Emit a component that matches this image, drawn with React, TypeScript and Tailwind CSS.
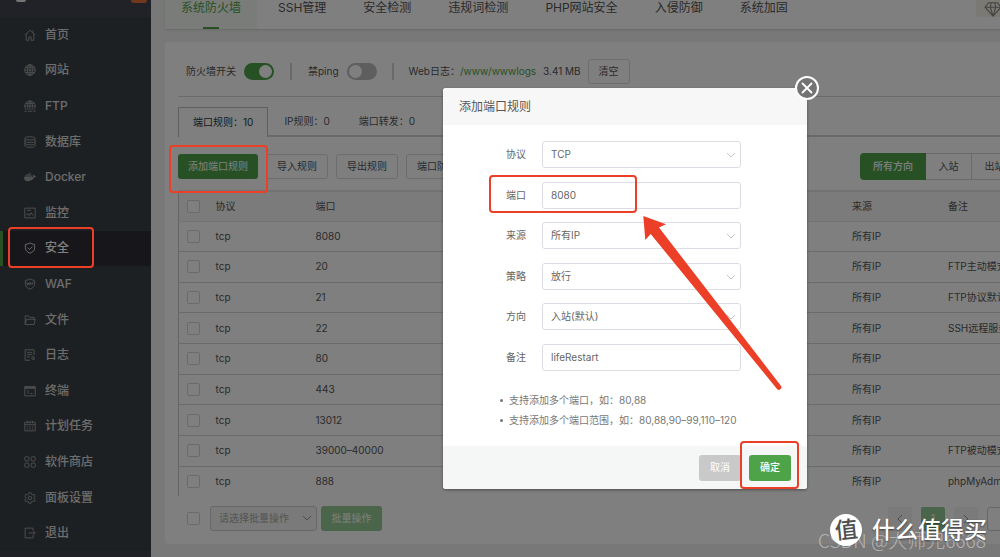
import type { ReactNode } from "react";
import { FaDocker } from "react-icons/fa";

const stroke = { fill: "none", stroke: "currentColor", strokeWidth: 1.2 };

function Icon({ children }: { children: ReactNode }) {
  return (
    <svg viewBox="0 0 16 16" className="size-3 shrink-0" aria-hidden="true" {...stroke}>
      {children}
    </svg>
  );
}

type NavItem = { label: string; icon: ReactNode; active?: boolean };

const shield = "M8 1.2c2 1.3 4 1.9 6.2 2v4.6c0 3.300-2.300 5.600-6.200 7.200-3.900-1.600-6.200-3.900-6.200-7.200V3.200C4 3.100 6 2.500 8 1.200z";

const nav: NavItem[] = [
  { label: "首页", icon: <Icon><path d="M1 8.200 8 1.600l7 6.600M3 7v8h3.500v-4.500h3V15H13V7M12 2v3" /></Icon> },
  { label: "网站", icon: <Icon><circle cx="8" cy="8" r="7" /><ellipse cx="8" cy="8" rx="3.200" ry="7" /><path d="M8 1v14M1 8h14M2 4.500h12M2 11.500h12" /></Icon> },
  { label: "FTP", icon: <Icon><path d="M3 13.200A7 7 0 1 1 13 13.200M1 8h14M8 1v12M2.500 4.500h11M0.500 15h3M5 15h6M12.500 15h3" /><path d="M5.500 13C4 9 4.500 4 8 1c3.500 3 4 8 2.500 12" /></Icon> },
  { label: "数据库", icon: <Icon><ellipse cx="8" cy="3.200" rx="6.800" ry="2.200" /><path d="M1.200 3.200v9.600c0 3 13.600 3 13.600 0V3.200M1.200 6.400c0 3 13.600 3 13.600 0M1.200 9.600c0 3 13.600 3 13.600 0" /></Icon> },
  { label: "Docker", icon: <FaDocker className="size-3 shrink-0" aria-hidden="true" /> },
  { label: "监控", icon: <Icon><path d="M1 1.500h14v13H1zM4 4.500h5M3 11l2.200-2.500 1.800 3 2.500-4 1.500 3h2" /></Icon> },
  { label: "安全", active: true, icon: <Icon><path d={shield} /><path d="m4.800 7.500 2.500 2.600 4-4" /></Icon> },
  { label: "WAF", icon: <Icon><path d={shield} /><path d="m3.500 6 1 3 1-2.500 1 2.500 1-3M7.500 9l1-3 1 3M11 9V6h2" /></Icon> },
  { label: "文件", icon: <Icon><path d="M1.500 14V2.500h4.500l1.500 2h6v2.500M1.500 14l2-7h11.500l-1.500 7z" /></Icon> },
  { label: "日志", icon: <Icon><path d="M13.500 8V1H1.500v14H8M4 4.500h7M4 7.500h7M4 10.500h4" /><circle cx="12" cy="12" r="1.800" /><path d="m13 13.500 1.500 1.500" /></Icon> },
  { label: "终端", icon: <Icon><path d="M1 2h14v12.500H1zM1 4.500h14M1 3.300h14M4 7l2.500 2.200L4 11.500M8 11.500h3.500" /></Icon> },
  { label: "计划任务", icon: <Icon><path d="M1 3h14v11.500H1zM1 6.200h14M4.500 1v3.500M8 1v3.500M11.500 1v3.500M3.500 9h2M7 9h2M10.500 9h2M3.500 12h2M7 12h2M10.500 12h2" /></Icon> },
  { label: "软件商店", icon: <Icon><rect x="1" y="1" width="5.500" height="5.500" rx="1.300" /><rect x="9.500" y="1" width="5.500" height="5.500" rx="1.300" /><rect x="1" y="9.500" width="5.500" height="5.500" rx="1.300" /><rect x="9.500" y="9.500" width="5.500" height="5.500" rx="1.300" /></Icon> },
  { label: "面板设置", icon: <Icon><path d="M6.500 1h3l.5 2 1.500.8 2-.7 1.500 2.400L13.500 7v2l1.500 1.500-1.500 2.400-2-.7-1.500.8-.5 2h-3L6 13l-1.500-.8-2 .7L1 10.500 2.500 9V7L1 5.500l1.500-2.400 2 .7L6 3z" /><circle cx="8" cy="8" r="2.300" /></Icon> },
  { label: "退出", icon: <Icon><path d="M12 5V1.500H1.500v13H12V11M6 8h9M12.300 5.300 15 8l-2.700 2.700" /></Icon> },
];

const tabs = ["系统防火墙", "SSH管理", "安全检测", "违规词检测", "PHP网站安全", "入侵防御", "系统加固"];

const rules = [
  { port: "8080", note: "" },
  { port: "20", note: "FTP主动模式" },
  { port: "21", note: "FTP协议默认" },
  { port: "22", note: "SSH远程服务" },
  { port: "80", note: "" },
  { port: "443", note: "" },
  { port: "13012", note: "" },
  { port: "39000–40000", note: "FTP被动模式" },
  { port: "888", note: "phpMyAdmin" },
];

function Sidebar() {
  return (
    <aside className="flex w-[151px] shrink-0 flex-col bg-[#3a4145]">
      <div className="flex h-[17px] items-start justify-between bg-[#40454f] pr-1 pl-4">
        <span className="h-[2px] w-[10px] rounded-b-full bg-[#e8e8e8]" />
        <span className="h-[3px] w-4 rounded-b bg-[#e07038]" />
      </div>
      <nav className="grid flex-1 auto-rows-fr">
        {nav.map((item) => (
          <a
            key={item.label}
            href="#"
            className={
              item.active
                ? "flex items-center gap-[9px] border-l-[3px] border-[#4ea348] bg-[#2e2f36] pl-[21px] text-xs font-medium text-white"
                : "flex items-center gap-[9px] pl-6 text-xs font-medium text-[#dadada]"
            }
          >
            <span className={item.active ? "text-[#e0e0e0]" : "text-[#a0a0a0]"}>{item.icon}</span>
            {item.label}
          </a>
        ))}
      </nav>
      <div className="h-[6px] bg-[#40454f]" />
    </aside>
  );
}

function Check({ label }: { label: string }) {
  return (
    <input
      type="checkbox"
      aria-label={label}
      className="block size-[13px] shrink-0 appearance-none rounded-[2px] border border-[#d4d4d4] bg-white"
    />
  );
}

function Switch({ label, on }: { label: string; on?: boolean }) {
  return (
    <label className="flex items-center gap-2">
      {label}
      <input
        type="checkbox"
        role="switch"
        defaultChecked={on}
        className="flex h-[17px] w-[30px] appearance-none items-center rounded-full bg-[#bdbdbd] px-[2px] before:block before:size-[13px] before:rounded-full before:bg-white checked:justify-end checked:bg-[#4ea348]"
      />
    </label>
  );
}

function Chevron({ className }: { className: string }) {
  return (
    <svg viewBox="0 0 10 6" className={className} aria-hidden="true" fill="none" stroke="currentColor">
      <path d="m1 1 4 4 4-4" />
    </svg>
  );
}

const plainButton = "h-[25px] rounded-[3px] border border-[#d8d8d8] px-[10px] whitespace-nowrap";

function RuleTable() {
  return (
    <table className="mt-[10px] h-[306px] w-full table-fixed border-l border-[#c8c8c8] text-left text-[#555]">
      <colgroup>
        <col className="w-[37px]" />
        <col className="w-[100px]" />
        <col />
        <col className="w-[96px]" />
        <col className="w-[70px]" />
      </colgroup>
      <thead>
        <tr className="h-[30px] border-t-2 border-b border-[#e4e4e4] bg-[#f6f6f6]">
          <th className="pl-2"><Check label="全选" /></th>
          <th className="font-normal">协议</th>
          <th className="font-normal">端口</th>
          <th className="font-normal">来源</th>
          <th className="font-normal">备注</th>
        </tr>
      </thead>
      <tbody>
        {rules.map((r) => (
          <tr key={r.port} className="border-b border-[#d6d6d6] last:border-b-0">
            <td className="pl-2"><Check label={r.port} /></td>
            <td>tcp</td>
            <td>{r.port}</td>
            <td>所有IP</td>
            <td className="whitespace-nowrap">{r.note}</td>
          </tr>
        ))}
      </tbody>
    </table>
  );
}

function Firewall() {
  return (
    <main className="min-w-0 flex-1 overflow-hidden bg-[#f1f1f1] pl-[14px]">
      <div className="min-w-[866px]">
        <div className="flex h-[29px] items-start bg-white shadow-sm">
          <div className="flex gap-[5px] text-xs leading-[15px] whitespace-nowrap text-[#555]" role="tablist">
            {tabs.map((t, i) => (
              <button
                key={t}
                role="tab"
                aria-selected={i === 0}
                className={
                  i === 0
                    ? "flex h-[29px] flex-col items-center justify-between bg-[#f4f8f3] px-4 text-[#4ea348] after:h-[2px] after:w-4 after:bg-[#4ea348]"
                    : "h-[15px] px-4"
                }
              >
                {t}
              </button>
            ))}
          </div>
          <div className="ml-[172px] flex h-[17px] w-12 items-center rounded-b bg-[#f6f2e9] pl-2">
            <svg viewBox="0 0 20 18" className="h-4 w-[18px] text-[#8a8884]" fill="none" stroke="currentColor" strokeWidth="1.200" aria-hidden="true">
              <path d="M5 2h10l4 5-9 10L1 7zM1 7h18M7 7l3 10 3-10M7 7l1-5M13 7l-1-5" />
            </svg>
          </div>
        </div>

        <section className="mt-[13px] rounded-[4px] bg-white pr-[13px] pb-[13px] pl-[13px] text-[10px] text-[#555]">
          <div className="flex h-[55px] items-center border-b border-[#d6d6d6] pt-1 pl-2 whitespace-nowrap">
            <Switch label="防火墙开关" on />
            <span className="mx-4 h-[17px] w-[2px] bg-[#d4d4d4]" />
            <Switch label="禁ping" />
            <span className="mx-[15px] h-[17px] w-[2px] bg-[#d4d4d4]" />
            <span>Web日志：</span>
            <a href="#" className="text-[#4ea348]">/www/wwwlogs</a>
            <span className="mx-[7px]">3.41 MB</span>
            <button className={plainButton}>清空</button>
          </div>

          <div className="mt-[10px] flex h-[30px] whitespace-nowrap" role="tablist">
            <button role="tab" aria-selected="true" className="border-x border-t border-[#bebebe] px-[14px] text-[#333]">端口规则：10</button>
            <div className="flex flex-1 border-b-2 border-[#d2d2d8]">
              <button role="tab" className="px-4">IP规则：0</button>
              <button role="tab" className="px-[13px]">端口转发：0</button>
            </div>
          </div>

          <div className="mt-4 flex items-center gap-2">
            <button className="h-[25px] rounded-[3px] bg-[#4ea348] px-[10px] whitespace-nowrap text-white">添加端口规则</button>
            <button className={plainButton}>导入规则</button>
            <button className={plainButton}>导出规则</button>
            <button className={plainButton}>端口防扫描</button>
            <div className="ml-auto flex h-[27px]">
              <button className="w-[66px] rounded-l-[4px] bg-[#4ea348] font-medium text-white">所有方向</button>
              <button className="w-[46px] border-y border-r border-[#d4d4d4]">入站</button>
              <button className="w-[46px] rounded-r-[4px] border-y border-r border-[#d4d4d4]">出站</button>
            </div>
          </div>

          <RuleTable />

          <div className="mt-[10px] flex h-[25px] items-center pl-[9px]">
            <Check label="选择全部规则" />
            <div className="relative ml-[10px]">
              <select aria-label="批量操作类型" className="h-[25px] w-[107px] appearance-none rounded-[3px] border border-[#cfcfcf] bg-[#f4f4f4] pl-2 text-[#a8a8a8]">
                <option>请选择批量操作</option>
              </select>
              <Chevron className="pointer-events-none absolute top-[9px] right-[5px] h-[6px] w-[10px] text-[#999]" />
            </div>
            <button className="ml-1 h-[25px] w-[61px] rounded-[3px] bg-[#94ca92] text-white">批量操作</button>
            <div className="ml-auto flex gap-[9px] text-[#999]">
              <button className="grid size-6 place-items-center bg-[#f4f4f4]" aria-label="上一页">
                <Chevron className="h-[6px] w-[10px] rotate-90" />
              </button>
              <button className="size-6 rounded-[2px] bg-[#94ca92] text-white">1</button>
              <button className="grid size-6 place-items-center bg-[#f4f4f4]" aria-label="下一页">
                <Chevron className="h-[6px] w-[10px] -rotate-90" />
              </button>
              <input aria-label="页码" className="h-6 w-[31px] rounded-[3px] border border-[#cfcfcf]" />
            </div>
          </div>
        </section>
      </div>
    </main>
  );
}

type Field = { id: string; label: string; value: string; select?: boolean };

const fields: Field[] = [
  { id: "protocol", label: "协议", value: "TCP", select: true },
  { id: "port", label: "端口", value: "8080" },
  { id: "source", label: "来源", value: "所有IP", select: true },
  { id: "policy", label: "策略", value: "放行", select: true },
  { id: "direction", label: "方向", value: "入站(默认)", select: true },
  { id: "note", label: "备注", value: "lifeRestart" },
];

const fieldBox = "h-[27px] w-full appearance-none rounded-[3px] border border-[#dcdde4] bg-white px-2 text-[#666]";

function RuleDialog() {
  return (
    <div role="dialog" aria-labelledby="dialog-title" className="relative w-[364px] rounded-[3px] bg-white text-[10px] text-[#666] shadow-[0_1px_3px_rgba(0,0,0,0.4)]">
      <h2 id="dialog-title" className="flex h-[37px] items-center rounded-t-[3px] bg-[#f7f7f7] pl-4 text-xs text-[#555]">
        添加端口规则
      </h2>
      <button aria-label="关闭" className="absolute -top-3 -right-3 grid size-6 place-items-center rounded-full border-2 border-white bg-[#737373] text-white">
        <svg viewBox="0 0 12 12" className="size-3" fill="none" stroke="currentColor" strokeWidth="1.800" strokeLinecap="round" aria-hidden="true">
          <path d="m1.500 1.500 9 9M10.500 1.500l-9 9" />
        </svg>
      </button>
      <div className="mt-4 flex h-[230px] flex-col justify-between pr-[66px]">
        {fields.map((f) => (
          <div key={f.id} className="flex items-center gap-4">
            <label htmlFor={f.id} className="w-[83px] text-right">{f.label}</label>
            <div className="relative flex-1">
              {f.select ? (
                <>
                  <select id={f.id} className={fieldBox}>
                    <option>{f.value}</option>
                  </select>
                  <Chevron className="pointer-events-none absolute top-[11px] right-[5px] h-[6px] w-[10px] text-[#c4c4c4]" />
                </>
              ) : (
                <input id={f.id} defaultValue={f.value} className={fieldBox} />
              )}
            </div>
          </div>
        ))}
      </div>
      <ul className="mt-[19px] pl-[57px] leading-5 text-[#777]">
        {["支持添加多个端口，如：80,88", "支持添加多个端口范围，如：80,88,90–99,110–120"].map((t) => (
          <li key={t} className="flex items-center gap-[6px] whitespace-nowrap before:size-[3px] before:rounded-full before:bg-[#777]">{t}</li>
        ))}
      </ul>
      <div className="mt-4 flex h-[43px] items-center justify-end gap-2 rounded-b-[3px] bg-[#f5f7f7] pr-4">
        <button className="h-[26px] w-[42px] rounded-[3px] bg-[#c9c9c9] text-white">取消</button>
        <button className="h-[26px] w-[42px] rounded-[3px] bg-[#4ea348] font-medium text-white">确定</button>
      </div>
    </div>
  );
}

function Annotations() {
  return (
    <div className="pointer-events-none absolute inset-0">
      <div className="absolute top-[227px] left-2 h-[41px] w-[86px] rounded-[4px] border-2 border-[#eb4027]" />
      <div className="absolute top-[145px] left-[169px] h-12 w-[99px] rounded-[4px] border-2 border-[#eb4027]" />
      <div className="absolute top-[175px] left-[489px] h-[38px] w-[148px] rounded-[4px] border-2 border-[#eb4027]" />
      <div className="absolute top-[441px] left-[740px] h-12 w-[59px] rounded-[4px] border-2 border-[#eb4027]" />
      <svg viewBox="0 0 140 176" className="absolute top-[215px] left-[642px] h-[176px] w-[140px]" fill="#eb4027" aria-hidden="true">
        <path d="M1.300 1 24 9.300 17 12.500 138.700 170.500a2.400 2.400 0 0 1-3.700 3.500L8.700 19 3.300 25z" />
      </svg>
      <div className="absolute top-[528px] left-[818px] font-['Noto_Sans_CJK_SC',sans-serif] text-[19px] leading-6 font-light whitespace-nowrap text-[#c4c4c4]/80">
        CSDN @大师兄6668
      </div>
      <div className="absolute top-[514px] left-[830px] flex items-center gap-[10px] whitespace-nowrap text-white">
        <span className="grid size-8 place-items-center rounded-full bg-white text-[23px] leading-none font-medium text-[#505050]">
          <span className="-rotate-6">值</span>
        </span>
        <span className="text-[23px] leading-8 font-medium [text-shadow:0_1px_2px_rgba(0,0,0,0.5)]">什么值得买</span>
      </div>
    </div>
  );
}

export default function App() {
  return (
    <div className="relative flex min-h-screen overflow-hidden font-['Inter','Noto_Sans_CJK_SC',sans-serif]">
      <Sidebar />
      <Firewall />
      <div className="absolute inset-0 flex items-start justify-center bg-black/50 pt-[88px] pl-[250px]">
        <RuleDialog />
      </div>
      <Annotations />
    </div>
  );
}
